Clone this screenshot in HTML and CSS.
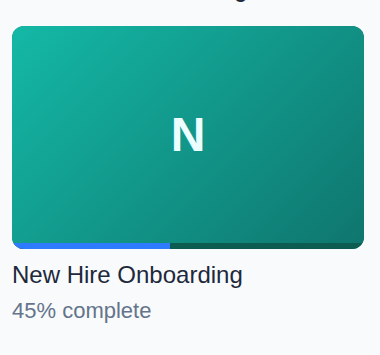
FILE: index.html
```html
<!DOCTYPE html>
<html lang="en">
<head>
    <meta charset="UTF-8">
    <meta name="viewport" content="width=device-width, initial-scale=1.0">
    <title>Onboarding</title>
    <link rel="stylesheet" href="styles.css">
</head>
<body>
    <div class="page">
        <!-- Encabezado (desplazado) -->
        <h2 class="section-title">Continue Learning</h2>

        <!-- Tarjeta de curso -->
        <div class="course-card">
            <div class="course-thumb">
                <span class="course-initial">N</span>
            </div>
            <div class="progress-track">
                <div class="progress-fill" style="width: 45%"></div>
            </div>
        </div>
        <h3 class="course-name">New Hire Onboarding</h3>
        <p class="course-meta">45% complete</p>
    </div>
</body>
</html>
```

FILE: styles.css
```css
/* Estilo general */
body { margin: 0; font-family: "Liberation Sans", Arial, sans-serif; background-color: #f8fafc; }
.page { padding: 0 16px 0 12px; }
.section-title { margin: -23px 0 21px; padding-right: 117px; font-size: 20px; line-height: 28px; font-weight: bold; color: #1e293b; text-align: right; }

/* Tarjeta */
.course-card { border-radius: 12px; overflow: hidden; background-color: #0f766e; }
.course-thumb {
    height: 217px;
    background: linear-gradient(135deg, #14b8a6 0%, #0f766e 100%);
    display: flex;
    align-items: center;
    justify-content: center;
}
.course-initial { font-size: 48px; font-weight: bold; color: #ecfeff; line-height: 1; }
.progress-track { height: 6px; background-color: #0c5c52; }
.progress-fill { height: 100%; background-color: #2f7bff; }

.course-name { margin: 11px 0 0; font-size: 24px; line-height: 30px; font-weight: normal; color: #1e293b; }
.course-meta { margin: 7px 0 0; font-size: 22px; line-height: 28px; color: #64748b; }
```
